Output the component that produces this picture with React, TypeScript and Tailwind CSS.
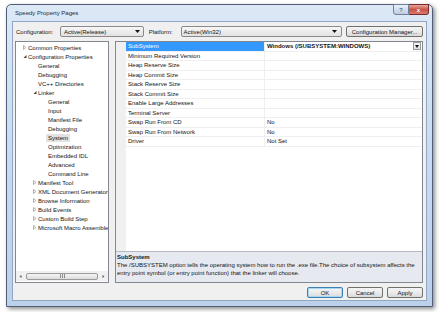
const tree: { label: string; depth: number; arrow?: "open" | "closed"; selected?: boolean }[] = [
  { label: "Common Properties", depth: 0, arrow: "closed" },
  { label: "Configuration Properties", depth: 0, arrow: "open" },
  { label: "General", depth: 1 },
  { label: "Debugging", depth: 1 },
  { label: "VC++ Directories", depth: 1 },
  { label: "Linker", depth: 1, arrow: "open" },
  { label: "General", depth: 2 },
  { label: "Input", depth: 2 },
  { label: "Manifest File", depth: 2 },
  { label: "Debugging", depth: 2 },
  { label: "System", depth: 2, selected: true },
  { label: "Optimization", depth: 2 },
  { label: "Embedded IDL", depth: 2 },
  { label: "Advanced", depth: 2 },
  { label: "Command Line", depth: 2 },
  { label: "Manifest Tool", depth: 1, arrow: "closed" },
  { label: "XML Document Generator", depth: 1, arrow: "closed" },
  { label: "Browse Information", depth: 1, arrow: "closed" },
  { label: "Build Events", depth: 1, arrow: "closed" },
  { label: "Custom Build Step", depth: 1, arrow: "closed" },
  { label: "Microsoft Macro Assemble", depth: 1, arrow: "closed" },
];

const props: [string, string][] = [
  ["SubSystem", "Windows (/SUBSYSTEM:WINDOWS)"],
  ["Minimum Required Version", ""],
  ["Heap Reserve Size", ""],
  ["Heap Commit Size", ""],
  ["Stack Reserve Size", ""],
  ["Stack Commit Size", ""],
  ["Enable Large Addresses", ""],
  ["Terminal Server", ""],
  ["Swap Run From CD", "No"],
  ["Swap Run From Network", "No"],
  ["Driver", "Not Set"],
];

const indent = ["pl-[6px]", "pl-[16px]", "pl-[26px]"];

const Arrow = ({ kind }: { kind?: "open" | "closed" }) => {
  if (kind === "closed")
    return (
      <svg width="6" height="7" viewBox="0 0 6 7" className="shrink-0">
        <path d="M1.5 1.5 L4 3.5 L1.5 5.5 Z" fill="none" stroke="#a0a0a0" strokeWidth="0.8" />
      </svg>
    );
  if (kind === "open")
    return (
      <svg width="6" height="7" viewBox="0 0 6 7" className="shrink-0">
        <path d="M4.5 2 L4.5 5 L1.5 5 Z" fill="#404040" />
      </svg>
    );
  return <span className="w-[6px] shrink-0" />;
};

const DownTri = () => (
  <svg width="5" height="3" viewBox="0 0 5 3">
    <path d="M0 0 L5 0 L2.5 3 Z" fill="#111" />
  </svg>
);

const Button = ({ label, primary }: { label: string; primary?: boolean }) => (
  <div
    className={`flex h-[11px] w-[36px] items-center justify-center rounded-[2px] border bg-gradient-to-b from-[#f4f4f4] via-[#ebebeb] to-[#d9d9d9] ${
      primary ? "border-[#3c7fb1] shadow-[inset_0_0_0_1px_#a6d7f3]" : "border-[#707070]"
    }`}
  >
    {label}
  </div>
);

export default function App() {
  return (
    <div className="h-[312px] w-[439px] overflow-hidden bg-white pl-[6px] pt-[4px] text-[6px] leading-none text-[#141414] [font-family:'Liberation_Sans',Arial,sans-serif]">
      <div className="relative flex h-[303px] w-[427px] flex-col rounded-t-[5px] border border-[#4f5f75] bg-gradient-to-b from-[#dce8f6] via-[#c9dbf0] to-[#bcd0ea] px-[5px] pb-[5px] shadow-[2px_2px_4px_rgba(0,0,0,0.45)]">
        <div className="flex h-[16px] items-center pl-[3px] text-[#1e2a3a]">Speedy Property Pages</div>
        <div className="absolute right-[3px] top-[-1px] flex">
          <div className="flex h-[11px] w-[16px] items-center justify-center rounded-bl-[3px] border border-[#6f7f96] bg-gradient-to-b from-[#e9f0f9] to-[#bccde4] text-[6px] text-[#3a4a60]">?</div>
          <div className="flex h-[11px] w-[20px] items-center justify-center rounded-br-[3px] border border-l-0 border-[#7a2a2a] bg-gradient-to-b from-[#e8a89c] via-[#c75447] to-[#d97a6e] text-[6px] font-bold text-white">x</div>
        </div>

        <div className="flex flex-1 flex-col border border-[#8fa6c4] bg-[#f0f0f0] pl-[2px] pr-[3px]">
          <div className="mt-[4px] flex h-[11px] items-center">
            <span className="w-[45px] pl-[1px]">Configuration:</span>
            <div className="flex h-[11px] w-[84px] items-center justify-between rounded-[2px] border border-[#8a8a8a] bg-gradient-to-b from-[#f7f7f7] to-[#e2e2e2] pl-[3px] pr-[3px]">
              <span>Active(Release)</span>
              <DownTri />
            </div>
            <span className="ml-[5px] w-[32px]">Platform:</span>
            <div className="flex h-[11px] w-[162px] items-center justify-between rounded-[2px] border border-[#8a8a8a] bg-gradient-to-b from-[#f7f7f7] to-[#e2e2e2] pl-[2px] pr-[4px]">
              <span>Active(Win32)</span>
              <DownTri />
            </div>
            <div className="ml-[4px] flex h-[11px] w-[77px] items-center justify-center rounded-[2px] border border-[#707070] bg-gradient-to-b from-[#f4f4f4] via-[#ebebeb] to-[#d9d9d9]">
              Configuration Manager...
            </div>
          </div>

          <div className="mt-[4px] flex h-[242px] gap-[6px]">
            <div className="flex w-[94px] flex-col border border-[#828790] bg-white">
              <div className="flex-1 overflow-hidden pt-[1px]">
                {tree.map((t, i) => (
                  <div key={i} className={`flex h-[9px] items-center whitespace-nowrap ${indent[t.depth]}`}>
                    <Arrow kind={t.arrow} />
                    <span className={t.selected ? "ml-[-2px] bg-[#e2e2e2] px-[2px] py-[1px]" : ""}>{t.label}</span>
                  </div>
                ))}
              </div>
              <div className="mb-[1px] flex h-[10px] items-center bg-[#f0f0f0] px-[2px]">
                <svg width="5" height="5" viewBox="0 0 5 5"><path d="M3.5 1 L1.5 2.5 L3.5 4 Z" fill="#555" /></svg>
                <div className="mx-[3px] flex h-[7px] flex-1 items-center justify-center rounded-[2px] border border-[#9a9a9a] bg-gradient-to-b from-[#f5f5f5] to-[#dcdcdc]">
                  <div className="flex gap-[1px]">
                    <span className="h-[4px] w-[1px] bg-[#8a8a8a]" />
                    <span className="h-[4px] w-[1px] bg-[#8a8a8a]" />
                    <span className="h-[4px] w-[1px] bg-[#8a8a8a]" />
                  </div>
                </div>
                <svg width="5" height="5" viewBox="0 0 5 5"><path d="M1.5 1 L3.5 2.5 L1.5 4 Z" fill="#555" /></svg>
              </div>
            </div>

            <div className="flex flex-1 flex-col border border-[#828790] bg-white">
              <div className="flex flex-1">
                <div className="w-[10px] bg-[#f0f0f0]" />
                <div className="flex-1">
                  {props.map(([name, value], i) => (
                    <div key={name} className="flex h-[9.5px] border-b border-[#efefef]">
                      <div className={`flex w-[139px] items-center border-r border-[#efefef] pl-[2px] ${i === 0 ? "bg-[#3399ff] text-white" : ""}`}>
                        {name}
                      </div>
                      <div className={`flex flex-1 items-center justify-between pl-[2px] pr-[1px] ${i === 0 ? "font-bold" : ""}`}>
                        <span>{value}</span>
                        {i === 0 && (
                          <div className="flex h-[8px] w-[8px] items-center justify-center border border-[#9a9a9a] bg-gradient-to-b from-[#f7f7f7] to-[#dedede]">
                            <svg width="4" height="3" viewBox="0 0 4 3"><path d="M0 0 L4 0 L2 3 Z" fill="#111" /></svg>
                          </div>
                        )}
                      </div>
                    </div>
                  ))}
                </div>
              </div>
              <div className="h-[31px] border-t border-[#b4b8c0] bg-[#e6e9ef] pl-[1px] pt-[2px]">
                <div className="h-[8px] font-bold">SubSystem</div>
                <div className="h-[8px] whitespace-nowrap">
                  The /SUBSYSTEM option tells the operating system how to run the .exe file.The choice of subsystem affects the
                </div>
                <div className="h-[8px] whitespace-nowrap">entry point symbol (or entry point function) that the linker will choose.</div>
              </div>
            </div>
          </div>

          <div className="mt-[4px] flex justify-end gap-[4px] pr-[0px]">
            <Button label="OK" primary />
            <Button label="Cancel" />
            <Button label="Apply" />
          </div>
        </div>
      </div>
    </div>
  );
}
